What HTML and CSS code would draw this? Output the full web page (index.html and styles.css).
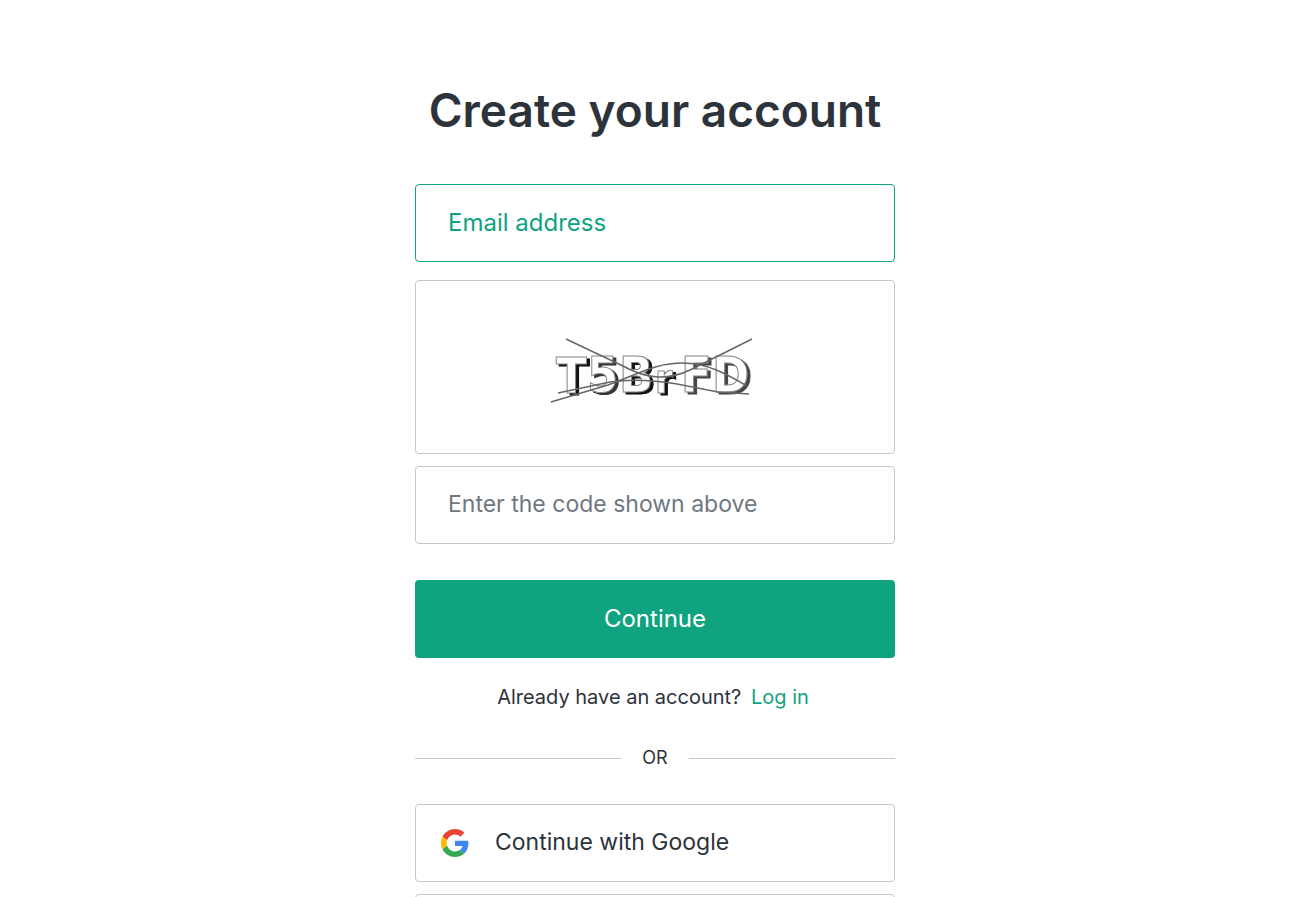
FILE: index.html
```html
<!DOCTYPE html>
<html lang="en">
<head>
<meta charset="utf-8">
<meta name="viewport" content="width=device-width, initial-scale=1">
<title>Create your account</title>
<link rel="stylesheet" href="styles.css">
</head>
<body>
<main class="signup">
  <h1 class="title">Create your account</h1>
  <form class="form">
    <input class="field field-active" type="email" placeholder="Email address" aria-label="Email address">
    <div class="captcha">
      <svg class="captcha-image" width="206" height="68" viewBox="0 0 206 68" role="img" aria-label="Verification code">
        <g class="captcha-text">
          <text class="glyph ink-black" x="6" y="55">T</text>
          <text class="glyph ink-dark" x="37" y="54">5</text>
          <text class="glyph ink-black" x="69" y="54">B</text>
          <text class="glyph glyph-small ink-black" x="105" y="55">r</text>
          <text class="glyph ink-gray" x="131" y="54">F</text>
          <text class="glyph ink-gray" x="162" y="54">D</text>
        </g>
        <g class="captcha-lines">
          <path d="M16 1 L73 28 C98 42 119 42 140 32 L202 1"/>
          <path d="M1 64 L58 47 C89 36 105 25 133 25 C158 25 178 37 197 48"/>
          <path d="M8 55 L60 44 C80 41 103 42 127 46 L168 54 L199 56"/>
        </g>
      </svg>
    </div>
    <input class="field field-code" type="text" placeholder="Enter the code shown above" aria-label="Enter the code shown above">
    <button class="submit" type="submit">Continue</button>
  </form>
  <p class="login">Already have an account? <a class="login-link" href="#">Log in</a></p>
  <div class="divider">OR</div>
  <div class="providers">
    <button class="provider" type="button">
      <svg class="provider-icon" viewBox="0 0 48 48" aria-hidden="true">
        <path fill="#ea4335" d="M24 9.5c3.54 0 6.71 1.22 9.21 3.6l6.85-6.85C35.9 2.38 30.47 0 24 0 14.62 0 6.51 5.38 2.56 13.22l7.98 6.19C12.43 13.72 17.74 9.5 24 9.5z"/>
        <path fill="#4285f4" d="M46.98 24.55c0-1.57-.15-3.09-.38-4.55H24v9.02h12.94c-.58 2.96-2.26 5.48-4.78 7.18l7.73 6c4.51-4.18 7.09-10.36 7.09-17.65z"/>
        <path fill="#fbbc05" d="M10.53 28.59c-.48-1.45-.76-2.99-.76-4.59s.27-3.14.76-4.59l-7.98-6.19C.92 16.46 0 20.12 0 24c0 3.88.92 7.54 2.56 10.78l7.97-6.19z"/>
        <path fill="#34a853" d="M24 48c6.48 0 11.93-2.13 15.89-5.81l-7.73-6c-2.15 1.45-4.92 2.3-8.16 2.3-6.26 0-11.57-4.22-13.47-9.91l-7.98 6.19C6.51 42.62 14.62 48 24 48z"/>
      </svg>
      <span class="provider-name">Continue with Google</span>
    </button>
    <button class="provider" type="button" aria-label="More sign-in options"></button>
  </div>
</main>
</body>
</html>
```
FILE: styles.css
```css
* { box-sizing: border-box; }

html { overflow: hidden; height: 100%; }

body {
  height: 100%;
  margin: 0;
  padding-left: 5px;
  overflow: hidden;
  background: #fff;
  color: #2d333a;
  font-family: Inter, "Liberation Sans", sans-serif;
}

.signup {
  width: 100%;
  max-width: 480px;
  margin: 0 auto;
  padding-top: 80px;
}

.title {
  margin: 0 0 44px;
  font-size: 46px;
  line-height: 60px;
  font-weight: 600;
  text-align: center;
  white-space: nowrap;
}

.form { display: flex; flex-direction: column; }

.field {
  width: 100%;
  height: 78px;
  margin: 0;
  padding: 0 32px 2px;
  border: 1px solid #c2c8d0;
  border-radius: 4px;
  background: #fff;
  color: #2d333a;
  font: inherit;
  font-size: 24px;
  outline: 0;
}

.field::placeholder { color: #6f7780; opacity: 1; }

.field-active { border-color: #10a37f; }
.field-active::placeholder { color: #10a37f; }
.field-code { font-size: 23px; }

.captcha {
  display: flex;
  align-items: center;
  justify-content: center;
  height: 174px;
  margin: 18px 0 12px;
  padding: 10px 4px 0 0;
  border: 1px solid #c2c8d0;
  border-radius: 4px;
}

.captcha-image { overflow: visible; }

.glyph {
  font-family: "DejaVu Sans Condensed", "DejaVu Sans", sans-serif;
  font-size: 50px;
  font-weight: 700;
  fill: #fff;
  stroke: #888;
  stroke-width: 1px;
}

.glyph-small { font-size: 40px; }

.ink-black { filter: drop-shadow(3px 2px 0 #111); }
.ink-dark { filter: drop-shadow(3px 2px 0 #333); }
.ink-gray { filter: drop-shadow(3px 2px 0 #444); }

.captcha-lines { fill: none; stroke: #666; stroke-width: 1.5px; }

.submit {
  height: 78px;
  margin-top: 36px;
  padding-bottom: 2px;
  border: 0;
  border-radius: 4px;
  background: #10a37f;
  color: #fff;
  font: inherit;
  font-size: 24px;
  cursor: pointer;
}

.login {
  margin: 24px 0 0;
  font-size: 20px;
  line-height: 30px;
  text-align: center;
}

.login-link { margin: 0 4px; color: #10a37f; text-decoration: none; }

.divider {
  display: flex;
  align-items: center;
  gap: 21px;
  margin: 34px 0;
  font-size: 18px;
  line-height: 24px;
}

.divider::before,
.divider::after {
  flex: 1;
  height: 1px;
  background: #c2c8d0;
  content: "";
}

.providers { display: flex; flex-direction: column; gap: 12px; }

.provider {
  display: flex;
  align-items: center;
  gap: 26px;
  width: 100%;
  height: 78px;
  padding: 0 25px;
  border: 1px solid #c2c8d0;
  border-radius: 4px;
  background: #fff;
  color: #2d333a;
  font: inherit;
  font-size: 23px;
  cursor: pointer;
}

.provider-name { padding-bottom: 3px; }

.provider-icon { width: 28px; height: 28px; }
```
